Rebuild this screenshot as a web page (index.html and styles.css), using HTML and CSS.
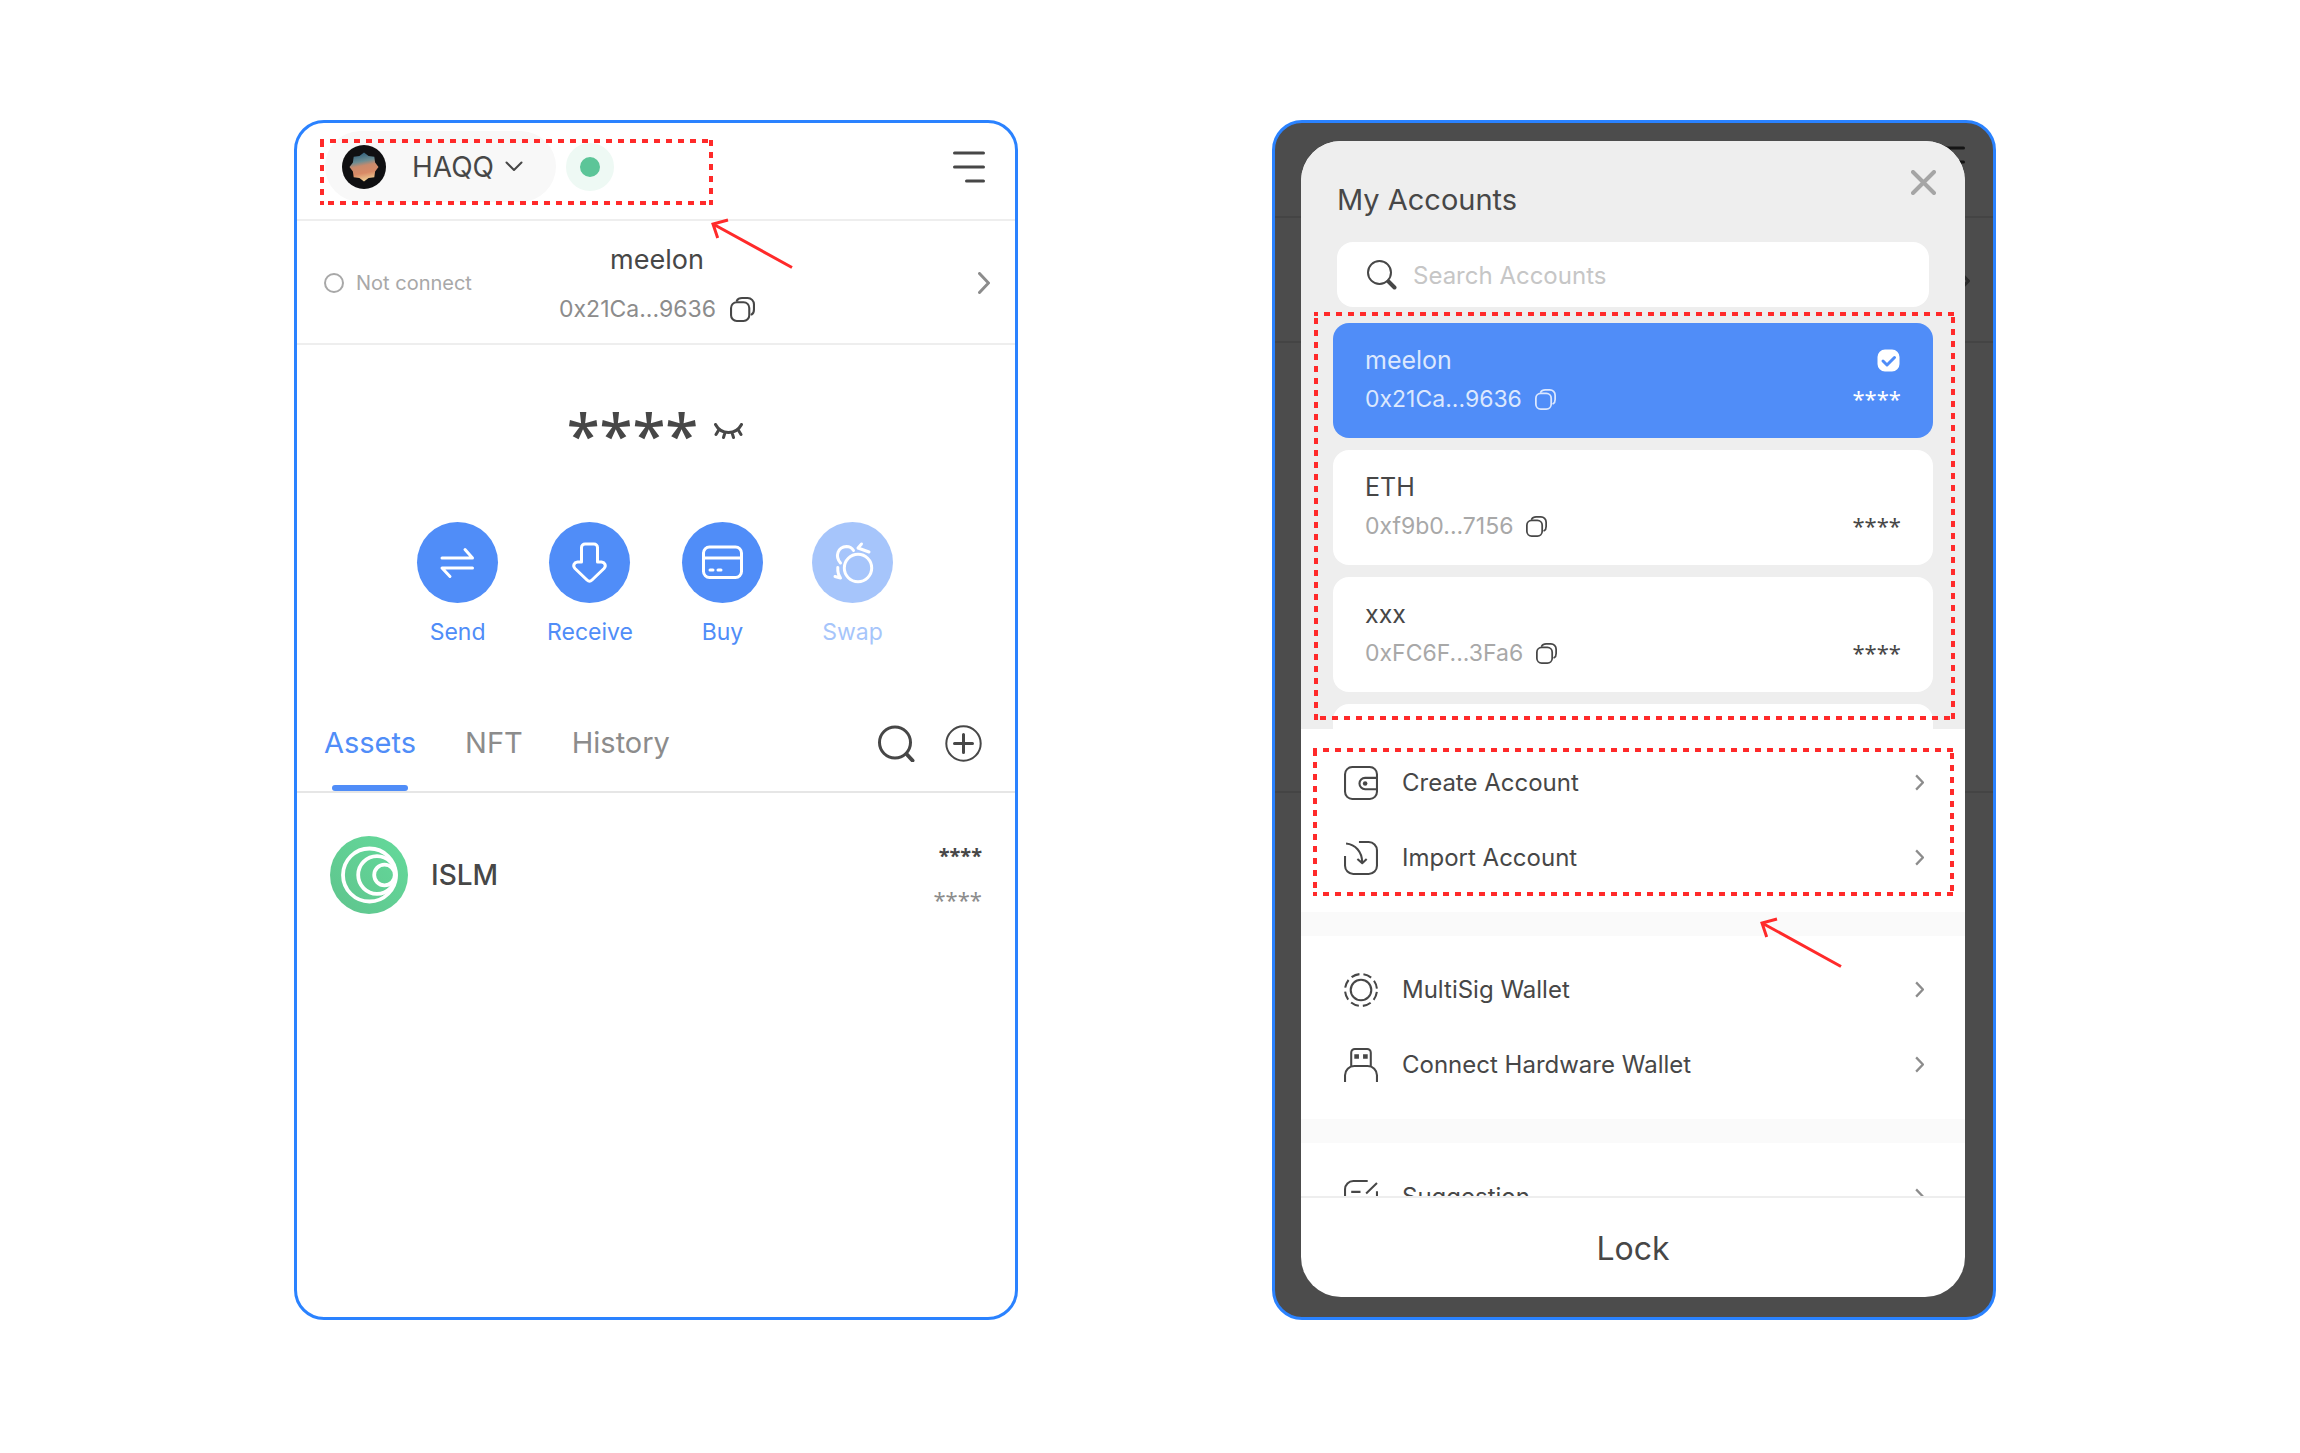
FILE: index.html
```
<!DOCTYPE html>
<html lang="en">
<head>
<meta charset="utf-8">
<meta name="viewport" content="width=device-width, initial-scale=1">
<title>Wallet accounts</title>
<link rel="stylesheet" href="styles.css">
</head>
<body>
<svg class="sprite" aria-hidden="true">
  <symbol id="copy" viewBox="0 0 24 24">
    <rect x="1" y="5" width="17.5" height="18" rx="5.5"/>
    <path d="M6.500 3.500C7.500 1.700 9.500 1 11.500 1H17a6 6 0 0 1 6 6v5c0 2-.8 4-2.300 4.800"/>
  </symbol>
  <symbol id="chevron" viewBox="0 0 12 22">
    <path d="M1.500 1.500 10.500 11 1.500 20.500"/>
  </symbol>
</svg>

<main class="stage">
  <section class="phone wallet" aria-label="Wallet">
    <header class="topbar">
      <button class="network" type="button">
        <svg class="network-logo" viewBox="0 0 44 44">
          <defs>
            <linearGradient id="haqq" x1=".4" y1="0" x2=".6" y2="1">
              <stop offset="0" stop-color="#2f5f7c"/><stop offset=".3" stop-color="#6e8d92"/>
              <stop offset=".45" stop-color="#c98a6c"/><stop offset=".7" stop-color="#d98a66"/>
              <stop offset="1" stop-color="#f0d79a"/>
            </linearGradient>
          </defs>
          <circle cx="22" cy="22" r="22" fill="#101012"/>
          <path fill="url(#haqq)" d="M22 7.500 26.600 10.900 32.300 11.700 33.100 17.400 36.500 22 33.100 26.600 32.300 32.300 26.600 33.100 22 36.500 17.400 33.100 11.700 32.300 10.900 26.600 7.500 22 10.900 17.400 11.700 11.700 17.400 10.900z"/>
        </svg>
        <span class="network-name">HAQQ</span>
        <svg class="network-caret" viewBox="0 0 18 11"><path d="M1.500 1.500 9 9 16.500 1.500"/></svg>
      </button>
      <span class="status"></span>
      <button class="menu" type="button" aria-label="Menu">
        <svg viewBox="0 0 32 32"><path d="M1.500 2h29M1.500 16h29M13.500 30h17"/></svg>
      </button>
    </header>

    <div class="account">
      <p class="connection"><span class="connection-dot"></span>Not connect</p>
      <div class="identity">
        <h1 class="identity-name">meelon</h1>
        <p class="identity-address">0x21Ca...9636
          <button class="copy" type="button" aria-label="Copy address"><svg class="copy-icon copy-large"><use href="#copy"/></svg></button>
        </p>
      </div>
      <a class="account-next" href="#accounts" aria-label="Accounts"><svg class="chevron chevron-large"><use href="#chevron"/></svg></a>
    </div>

    <div class="balance">
      <span class="balance-value">****</span>
      <button class="eye" type="button" aria-label="Show balance">
        <svg viewBox="0 0 29 22"><path d="M1.500 1.500C7 12 22 12 27.500 1.500M5 6.500 2 11.500M11 9.500 9.500 14.500M18 9.500 19.500 14.500M24 6.500 27 11.500"/></svg>
      </button>
    </div>

    <nav class="actions">
      <button class="action" type="button">
        <svg class="action-icon" viewBox="0 0 81 81"><path d="M25 36H55.500L48 27.500M55.500 46H25L33 54.500"/></svg>Send
      </button>
      <button class="action" type="button">
        <svg class="action-icon" viewBox="0 0 81 81"><path d="M32.500 40V25.500a3.500 3.500 0 0 1 3.500-3.500h9a3.500 3.500 0 0 1 3.500 3.500V40h4c3.500.5 5 3.800 2.500 6.500L43 58c-1.500 1.500-3.500 1.500-5 0L26 46.500c-2.500-2.700-1-6 2.500-6.500z"/></svg>Receive
      </button>
      <button class="action" type="button">
        <svg class="action-icon" viewBox="0 0 81 81"><rect x="21.500" y="25" width="38" height="30.500" rx="6"/><path d="M22 36h37M28 48h3M36 48h3"/></svg>Buy
      </button>
      <button class="action" type="button" disabled>
        <svg class="action-icon" viewBox="0 0 81 81"><circle cx="46" cy="46" r="13.700"/><path d="M28.500 41c-6-7-2.500-16 6-16.500 3 0 5.500 1.500 7 4M49.500 22 46 26 57 30M25.800 45.500c-.3 4 .7 7.500 2.700 10.500L23 54.500"/></svg>Swap
      </button>
    </nav>

    <div class="tabbar">
      <nav class="tabs">
        <a class="tab tab-current" href="#assets" aria-current="page">Assets</a>
        <a class="tab" href="#nft">NFT</a>
        <a class="tab" href="#history">History</a>
      </nav>
      <button class="tool" type="button" aria-label="Search assets">
        <svg viewBox="0 0 37 37"><circle cx="17" cy="17.500" r="15.500"/><path d="m28.500 29 6 6.500" stroke-width="4"/></svg>
      </button>
      <button class="tool" type="button" aria-label="Add asset">
        <svg viewBox="0 0 37 37"><circle cx="18.500" cy="18.500" r="17.200" stroke-width="2"/><path d="M9.500 18.500h18M18.500 9.500v18"/></svg>
      </button>
    </div>

    <ul class="assets" id="assets">
      <li class="asset">
        <svg class="asset-logo" viewBox="0 0 78 78">
          <defs><linearGradient id="islm" x1="1" y1="0" x2="0" y2="1"><stop offset="0" stop-color="#64da9b"/><stop offset="1" stop-color="#5fc48d"/></linearGradient></defs>
          <circle cx="39" cy="39" r="39" fill="url(#islm)"/>
          <g fill="none" stroke="#fff" stroke-width="3.800"><circle cx="39.500" cy="39" r="26.500"/><circle cx="47" cy="39" r="18.800"/><circle cx="54.500" cy="39" r="10.300"/></g>
        </svg>
        <span class="asset-name">ISLM</span>
        <span class="asset-values"><strong class="asset-amount">****</strong><span class="asset-fiat">****</span></span>
      </li>
    </ul>

    <svg class="callout callout-network" aria-hidden="true"><rect width="100%" height="100%"/></svg>
    <svg class="arrow arrow-network" viewBox="0 0 85 54" aria-hidden="true"><path d="M82 50.500 3 7M18 3 3 7 7.700 21"/></svg>
  </section>

  <section class="phone dimmed" aria-label="Account list">
    <div class="backdrop" aria-hidden="true">
      <div class="backdrop-top"><svg viewBox="0 0 32 32"><path d="M1.500 2h29M1.500 16h29M13.500 30h17"/></svg></div>
      <div class="backdrop-account"><svg class="chevron chevron-large"><use href="#chevron"/></svg></div>
      <div class="backdrop-body"></div>
    </div>

    <div class="modal" id="accounts" role="dialog" aria-labelledby="accounts-title">
      <div class="picker">
        <header class="picker-head">
          <h2 class="picker-title" id="accounts-title">My Accounts</h2>
          <button class="close" type="button" aria-label="Close"><svg viewBox="0 0 25 25"><path d="m2 2 21 21M23 2 2 23"/></svg></button>
        </header>
        <label class="search">
          <svg class="search-icon" viewBox="0 0 30 30"><circle cx="12.500" cy="12.500" r="11.500"/><path d="m21.500 21.500 6 6" stroke-width="4"/></svg>
          <input class="search-input" type="search" placeholder="Search Accounts" aria-label="Search Accounts">
        </label>
        <ul class="cards">
          <li class="card card-selected">
            <h3 class="card-name">meelon</h3>
            <svg class="card-check" viewBox="0 0 25 25"><rect width="25" height="25" rx="9" fill="#fff"/><path d="m7 13 4 4 7.500-7.500"/></svg>
            <p class="card-address">0x21Ca...9636 <button class="copy" type="button" aria-label="Copy address"><svg class="copy-icon"><use href="#copy"/></svg></button></p>
            <span class="card-balance">****</span>
          </li>
          <li class="card">
            <h3 class="card-name">ETH</h3>
            <p class="card-address">0xf9b0...7156 <button class="copy" type="button" aria-label="Copy address"><svg class="copy-icon"><use href="#copy"/></svg></button></p>
            <span class="card-balance">****</span>
          </li>
          <li class="card">
            <h3 class="card-name">xxx</h3>
            <p class="card-address">0xFC6F...3Fa6 <button class="copy" type="button" aria-label="Copy address"><svg class="copy-icon"><use href="#copy"/></svg></button></p>
            <span class="card-balance">****</span>
          </li>
          <li class="card"></li>
        </ul>
      </div>

      <nav class="options">
        <div class="group">
          <a class="option" href="#create">
            <svg class="option-icon" viewBox="0 0 33 33"><rect x="1" y="1" width="31" height="31" rx="7"/><path d="M32 11.500H20.500a5.500 5.500 0 0 0 0 11H32"/><circle cx="20.500" cy="17" r="2.200" fill="#474747" stroke="none"/></svg>
            Create Account <svg class="chevron"><use href="#chevron"/></svg>
          </a>
          <a class="option" href="#import">
            <svg class="option-icon" viewBox="0 0 33 33"><path d="M14.500 1H24a8 8 0 0 1 8 8v15a8 8 0 0 1-8 8H9a8 8 0 0 1-8-8v-9.500M2 2.500C11 3.500 17.500 10 17.700 21M13 17.500l4.700 4 4.300-4"/></svg>
            Import Account <svg class="chevron"><use href="#chevron"/></svg>
          </a>
        </div>
        <div class="group">
          <a class="option" href="#multisig">
            <svg class="option-icon" viewBox="0 0 33 33"><circle cx="16.500" cy="16.500" r="10"/><circle cx="16.500" cy="16.500" r="15.500" stroke-dasharray="8.170 4" stroke-dashoffset="-2"/></svg>
            MultiSig Wallet <svg class="chevron"><use href="#chevron"/></svg>
          </a>
          <a class="option" href="#hardware">
            <svg class="option-icon" viewBox="0 0 33 33"><path d="M7 17.500V4.500A3.500 3.500 0 0 1 10.500 1h12A3.500 3.500 0 0 1 26 4.500v13M1 33v-6.500a9 9 0 0 1 9-9h13a9 9 0 0 1 9 9V33"/><path d="M10 6h4.500v4.500H10zM18.500 6H23v4.500h-4.500z" fill="#474747" stroke="none"/></svg>
            Connect Hardware Wallet <svg class="chevron"><use href="#chevron"/></svg>
          </a>
        </div>
        <div class="group">
          <a class="option" href="#suggestion">
            <svg class="option-icon" viewBox="0 0 33 33"><path d="M23 1H9a8 8 0 0 0-8 8v15a8 8 0 0 0 8 8h15a8 8 0 0 0 8-8V11M32 3 21.500 13M7 11.500h9M7 17.500h14"/></svg>
            Suggestion <svg class="chevron"><use href="#chevron"/></svg>
          </a>
        </div>
      </nav>
      <button class="lock" type="button">Lock</button>
    </div>

    <svg class="callout callout-cards" aria-hidden="true"><rect width="100%" height="100%"/></svg>
    <svg class="callout callout-options" aria-hidden="true"><rect width="100%" height="100%"/></svg>
    <svg class="arrow arrow-options" viewBox="0 0 85 54" aria-hidden="true"><path d="M82 50.500 3 7M18 3 3 7 7.700 21"/></svg>
  </section>
</main>
</body>
</html>
```
FILE: styles.css
```
:root {
  --ink: #474747;
  --muted: #8c8c8c;
  --faint: #a8a8a8;
  --line: #eeeeee;
  --accent: #508df8;
  --frame: #2a82ff;
  --mark: #ff2a2a;
}

* { box-sizing: border-box; }

body {
  margin: 0;
  background: #fff;
  color: var(--ink);
  font-family: Inter, "Liberation Sans", sans-serif;
  font-size: 24px;
}

h1, h2, h3, p, ul { margin: 0; padding: 0; font-weight: 400; }
ul { list-style: none; }
a { color: inherit; text-decoration: none; }
button { margin: 0; padding: 0; border: 0; background: none; color: inherit; font: inherit; }
svg { display: block; fill: none; stroke: currentColor; stroke-width: 3; stroke-linecap: round; stroke-linejoin: round; }
.sprite { position: absolute; width: 0; height: 0; }
.network-logo, .asset-logo { stroke: none; }

.stage {
  display: grid;
  grid-template-columns: 1fr 1fr;
  gap: 254px;
  padding: 120px 304px 133px 294px;
}

.phone {
  position: relative;
  border: 3px solid var(--frame);
  border-radius: 30px;
  background: #fff;
}

/* Shared pieces */
.copy { display: block; }
.copy-icon { width: 21px; height: 21px; stroke-width: 2; }
.copy-large { width: 25px; height: 25px; color: var(--ink); }
.chevron { width: 9px; height: 17px; color: var(--muted); stroke-width: 3; stroke-linecap: butt; stroke-linejoin: miter; }
.chevron-large { width: 12px; height: 22px; stroke-linecap: round; }

/* Top bar */
.topbar {
  display: flex;
  align-items: center;
  gap: 10px;
  padding: 8px 30px 17px 28px;
  border-bottom: 2px solid var(--line);
}
.network {
  display: flex;
  align-items: center;
  height: 71px;
  padding: 0 33px 0 17px;
  border-radius: 36px;
  background: #f8f8f8;
  font-size: 28px;
}
.network-logo { width: 44px; height: 44px; margin-right: 26px; }
.network-name { margin-right: 11px; }
.network-caret { width: 18px; height: 11px; stroke-width: 2; }
.status {
  width: 48px;
  height: 48px;
  border: 14px solid #eef9f4;
  border-radius: 50%;
  background: #5cc598;
}
.menu { margin-left: auto; }
.menu svg { width: 32px; height: 32px; }

/* Current account */
.account {
  display: grid;
  grid-template-columns: 1fr auto 1fr;
  align-items: center;
  padding: 21px 25px 19px 27px;
  border-bottom: 2px solid var(--line);
}
.connection { display: flex; align-items: center; gap: 12px; color: var(--faint); font-size: 20px; }
.connection-dot { width: 20px; height: 20px; border: 2px solid var(--faint); border-radius: 50%; }
.identity { display: grid; gap: 16px; justify-items: center; }
.identity-name { font-size: 27px; line-height: 36px; }
.identity-address { display: flex; align-items: center; gap: 14px; color: var(--muted); font-size: 23px; line-height: 30px; }
.account-next { justify-self: end; }

/* Balance */
.balance { display: flex; align-items: center; justify-content: center; gap: 16px; padding: 49px 2px 3px 0; }
.balance-value, .asset-values, .card-balance { font-family: "Noto Sans", sans-serif; }
.balance-value { font-size: 60px; font-weight: 500; line-height: 80px; }
.eye svg { width: 29px; height: 22px; }

/* Actions */
.actions { display: flex; justify-content: center; gap: 49px; padding: 45px 2px 0 0; }
.action { display: grid; gap: 15px; justify-items: center; color: var(--accent); font-size: 23px; line-height: 28px; }
.action:disabled { opacity: .5; }
.action-icon { width: 81px; height: 81px; border-radius: 50%; background: var(--accent); color: #fff; }

/* Tabs */
.tabbar {
  display: flex;
  align-items: center;
  gap: 30px;
  margin-top: 49px;
  padding: 0 33px 0 27px;
  border-bottom: 2px solid #e6e6e6;
}
.tabs { display: flex; gap: 49px; margin-right: auto; }
.tab { position: relative; color: var(--muted); font-size: 29px; line-height: 96px; }
.tab-current { color: var(--accent); }
.tab-current::after {
  content: "";
  position: absolute;
  right: 8px;
  bottom: 0;
  left: 8px;
  height: 6px;
  border-radius: 3px;
  background: var(--accent);
}
.tool svg { width: 37px; height: 37px; }

/* Assets */
.assets { padding: 43px 33px; }
.asset { display: flex; align-items: center; gap: 23px; }
.asset-logo { width: 78px; height: 78px; }
.asset-name { font-size: 28px; font-weight: 500; }
.asset-values { display: grid; gap: 13px; justify-items: end; margin-left: auto; padding-top: 4px; line-height: 30px; }
.asset-amount { font-size: 20px; font-weight: 700; }
.asset-fiat { color: var(--muted); font-size: 22px; }

/* Dimmed wallet behind the dialog */
.dimmed { background: #4c4c4c; }
.backdrop { position: absolute; inset: 0; }
.backdrop svg { margin-left: auto; }
.backdrop-top, .backdrop-account, .backdrop-body { border-bottom: 2px solid #444; }
.backdrop-top { padding: 23px 28px 38px; color: #151515; }
.backdrop-top svg { width: 32px; height: 32px; }
.backdrop-account { padding: 52px 23px 49px; }
.backdrop-account svg { color: #2a2a2a; }
.backdrop-body { height: 450px; }

/* Account dialog */
.modal {
  position: relative;
  margin: 18px 28px 20px 26px;
  border-radius: 40px;
  overflow: hidden;
  background: #fff;
}
.picker { background: #eeeeee; }
.picker-head { display: flex; align-items: flex-start; justify-content: space-between; padding: 29px 29px 0 36px; }
.picker-title { padding-top: 12px; font-size: 29px; line-height: 36px; }
.close { color: #a5a5a5; }
.close svg { width: 25px; height: 25px; stroke-width: 4; }
.search {
  display: flex;
  align-items: center;
  gap: 16px;
  height: 65px;
  margin: 24px 36px 0;
  padding: 1px 30px 0;
  border-radius: 16px;
  background: #fff;
}
.search-icon { width: 30px; height: 30px; stroke-width: 2; }
.search-input { flex: 1; min-width: 0; padding: 0; border: 0; outline: 0; background: none; color: var(--ink); font: inherit; }
.search-input::placeholder { color: #c6c6c6; }

.cards { display: grid; grid-auto-rows: 115px; gap: 12px; height: 406px; margin-top: 16px; padding: 0 32px; overflow: hidden; }
.card {
  display: grid;
  grid-template: 32px 30px / 1fr auto;
  row-gap: 8px;
  padding: 21px 32px 24px;
  border-radius: 16px;
  background: #fff;
}
.card-name { grid-column: 1; font-size: 25px; line-height: 32px; }
.card-check { width: 25px; height: 25px; margin-top: 4px; justify-self: end; color: var(--accent); }
.card-address { display: flex; grid-row: 2; align-items: center; gap: 13px; color: var(--faint); font-size: 23px; line-height: 30px; }
.card-address .copy { color: var(--ink); }
.card-balance { grid-row: 2; font-size: 22px; line-height: 28px; }
.card-selected { background: var(--accent); color: #fff; }
.card-selected .card-name, .card-selected .card-address, .card-selected .copy { color: #dce8fe; }

.options { height: 467px; overflow: hidden; }
.group { padding: 16px 41px 17px 43px; }
.group + .group { border-top: 24px solid #fafafa; }
.option { display: flex; align-items: center; gap: 24px; height: 75px; }
.option-icon { width: 34px; height: 34px; stroke-width: 2; stroke-linecap: butt; }
.option .chevron { margin-left: auto; }
.lock { display: block; width: 100%; height: 101px; padding-top: 2px; border-top: 2px solid var(--line); font-size: 32px; }

/* Annotations */
.callout { position: absolute; overflow: hidden; stroke: var(--mark); stroke-width: 8; stroke-dasharray: 6 6; stroke-dashoffset: 2; stroke-linecap: butt; }
.callout-network { top: 16px; left: 23px; width: 393px; height: 66px; }
.callout-cards { top: 189px; left: 39px; width: calc(100% - 77px); height: 408px; }
.callout-options { top: 625px; left: 38px; width: calc(100% - 77px); height: 148px; }
.arrow { position: absolute; width: 85px; height: 54px; color: var(--mark); stroke-linecap: butt; stroke-linejoin: miter; }
.arrow-network { top: 94px; left: 413px; }
.arrow-options { top: 793px; right: 149px; }
```
